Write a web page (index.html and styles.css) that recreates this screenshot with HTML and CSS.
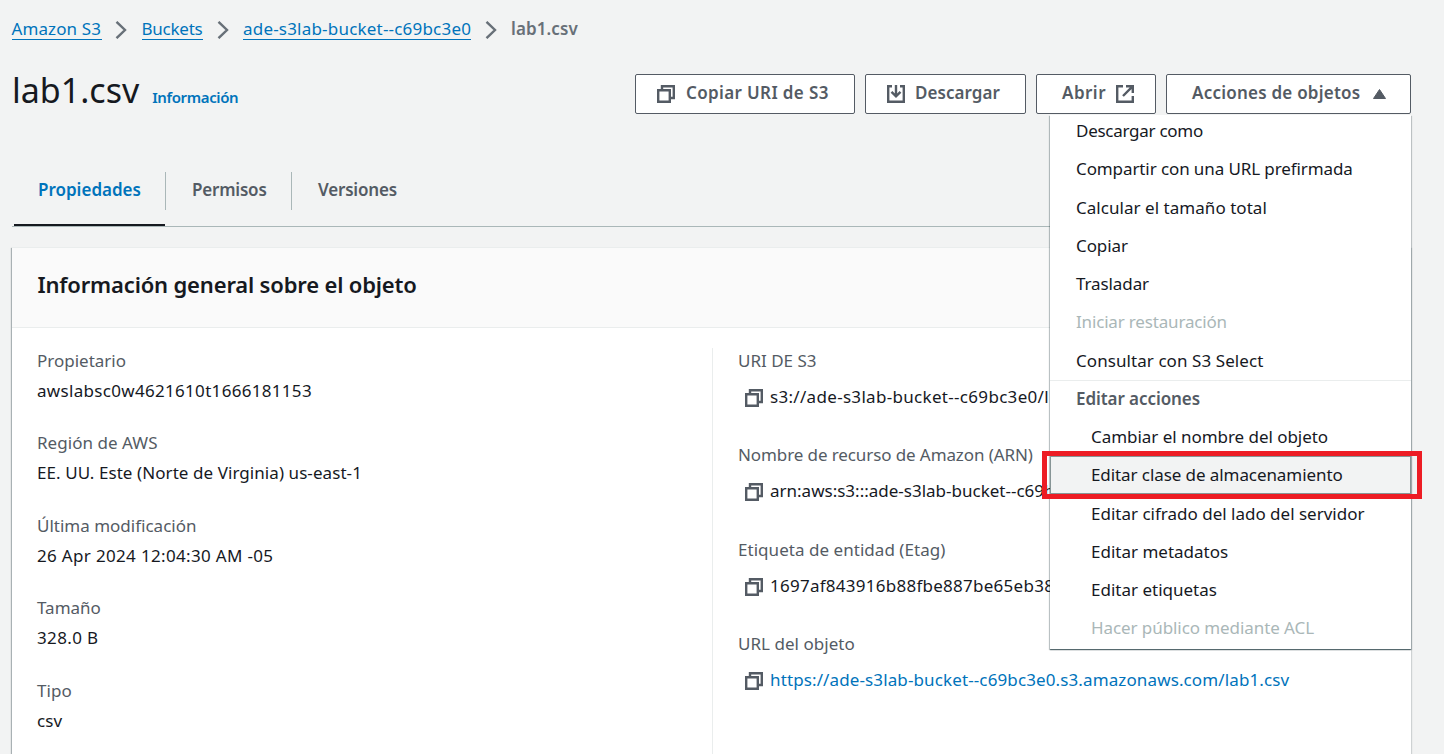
FILE: index.html
```html
<!DOCTYPE html>
<html lang="es">
<head>
<meta charset="utf-8">
<title>lab1.csv - Amazon S3</title>
<link rel="stylesheet" href="styles.css">
</head>
<body>
<svg class="defs" width="0" height="0">
  <symbol id="copy" viewBox="0 0 18 18"><path d="M5 5V1.200h11.800V13h-4M1.200 5.200h11.600v11.600H1.200z"/></symbol>
  <symbol id="chevron" viewBox="0 0 12 18"><path d="M1.500 .8L10 9l-8.500 8.200"/></symbol>
</svg>
<main class="page">
  <nav class="crumbs">
    <a class="crumb-1" href="#">Amazon S3</a>
    <svg class="chevron"><use href="#chevron"/></svg>
    <a class="crumb-2" href="#">Buckets</a>
    <svg class="chevron"><use href="#chevron"/></svg>
    <a class="crumb-3" href="#">ade-s3lab-bucket--c69bc3e0</a>
    <svg class="chevron"><use href="#chevron"/></svg>
    <span class="current">lab1.csv</span>
  </nav>

  <header class="header">
    <div class="title">
      <h1>lab1.csv</h1>
      <a class="info" href="#">Información</a>
    </div>
    <div class="actions">
      <button class="btn btn-copy"><svg class="icon"><use href="#copy"/></svg><span>Copiar URI de S3</span></button>
      <button class="btn btn-download"><svg class="icon" viewBox="0 0 18 18"><path d="M5 1.200H1.200v15.600h15.600V1.200H13M9 0v11M4.500 6.800L9 11.300l4.500-4.500"/></svg><span>Descargar</span></button>
      <button class="btn btn-open"><span>Abrir</span><svg class="icon" viewBox="0 0 18 18"><path d="M7 1.200H1.200v15.600h15.600V11M10 1.200h6.800V8M16.800 1.200L7 11"/></svg></button>
      <div class="dropdown">
        <button class="btn btn-more"><span>Acciones de objetos</span><svg class="caret" viewBox="0 0 13 10"><path d="M6.500 .5L12.500 9.500H.5z"/></svg></button>
        <div class="menu">
          <ul class="group">
            <li class="tk-n27">Descargar como</li>
            <li class="tk-n09">Compartir con una URL prefirmada</li>
            <li class="tk-05">Calcular el tamaño total</li>
            <li class="tk-n09">Copiar</li>
            <li class="tk-n09">Trasladar</li>
            <li class="disabled tk-n17">Iniciar restauración</li>
            <li class="tk-07">Consultar con S3 Select</li>
          </ul>
          <ul class="group sub">
            <li class="group-title">Editar acciones</li>
            <li class="tk-n04">Cambiar el nombre del objeto</li>
            <li class="active tk-n07">Editar clase de almacenamiento</li>
            <li>Editar cifrado del lado del servidor</li>
            <li>Editar metadatos</li>
            <li>Editar etiquetas</li>
            <li class="disabled tk-n07">Hacer público mediante ACL</li>
          </ul>
          <div class="marker"></div>
        </div>
      </div>
    </div>
  </header>

  <nav class="tabs">
    <a class="tab selected" href="#"><span>Propiedades</span></a>
    <a class="tab tab-perm" href="#"><span>Permisos</span></a>
    <a class="tab tab-vers" href="#"><span>Versiones</span></a>
  </nav>

  <section class="card">
    <div class="card-head"><h2>Información general sobre el objeto</h2></div>
    <div class="card-body">
      <dl class="col col-left">
        <div class="field"><dt>Propietario</dt><dd class="tk-31">awslabsc0w4621610t1666181153</dd></div>
        <div class="field"><dt class="tk-05">Región de AWS</dt><dd class="tk-07">EE. UU. Este (Norte de Virginia) us-east-1</dd></div>
        <div class="field"><dt>Última modificación</dt><dd class="tk-33">26 Apr 2024 12:04:30 AM -05</dd></div>
        <div class="field"><dt>Tamaño</dt><dd class="tk-35">328.0 B</dd></div>
        <div class="field"><dt class="tk-10">Tipo</dt><dd class="tk-10">csv</dd></div>
      </dl>
      <dl class="col col-right">
        <div class="field"><dt>URI DE S3</dt><dd class="tk-31"><svg class="icon"><use href="#copy"/></svg>s3://ade-s3lab-bucket--c69bc3e0/l</dd></div>
        <div class="field"><dt class="tk-n09">Nombre de recurso de Amazon (ARN)</dt><dd><svg class="icon"><use href="#copy"/></svg>arn:aws:s3:::ade-s3lab-bucket--c69b</dd></div>
        <div class="field"><dt class="tk-05">Etiqueta de entidad (Etag)</dt><dd class="tk-26"><svg class="icon"><use href="#copy"/></svg>1697af843916b88fbe887be65eb38</dd></div>
        <div class="field"><dt class="tk-05">URL del objeto</dt><dd class="tk-13"><svg class="icon"><use href="#copy"/></svg><a href="#">https://ade-s3lab-bucket--c69bc3e0.s3.amazonaws.com/lab1.csv</a></dd></div>
      </dl>
    </div>
  </section>
</main>
</body>
</html>
```
FILE: styles.css
```css
* { box-sizing: border-box; }
html, body { height: 100%; }
body {
  margin: 0;
  overflow: hidden;
  background: #f2f3f3;
  color: #16191f;
  font: 17px/27.5px "Noto Sans", sans-serif;
}
a { color: #0073bb; text-decoration: none; }
h1, h2, dl, dd, ul { margin: 0; padding: 0; }
ul { list-style: none; }
.defs { display: block; position: absolute; }
.page { height: 754px; padding: 0 33px 0 11.5px; display: flex; flex-direction: column; }

/* letter tracking steps */
.tk-n27 { letter-spacing: -.27px; }
.tk-n17 { letter-spacing: -.17px; }
.tk-n09 { letter-spacing: -.1px; }
.tk-n07 { letter-spacing: -.08px; }
.tk-n04 { letter-spacing: -.04px; }
.tk-05 { letter-spacing: .04px; }
.tk-07 { letter-spacing: .07px; }
.tk-10 { letter-spacing: .1px; }
.tk-13 { letter-spacing: .12px; }
.tk-26 { letter-spacing: .26px; }
.tk-31 { letter-spacing: .31px; }
.tk-33 { letter-spacing: .33px; }
.tk-35 { letter-spacing: .35px; }

/* breadcrumbs */
.crumbs { display: flex; align-items: center; height: 58px; flex: none; }
.crumbs a { height: 21px; line-height: 20px; border-bottom: 1px solid #0073bb; white-space: nowrap; }
.crumb-1 { width: 90px; letter-spacing: .1px; }
.crumb-2 { width: 61.5px; letter-spacing: -.24px; }
.crumb-3 { width: 228px; letter-spacing: .2px; }
.chevron { width: 12px; height: 18px; margin: 0 14.5px 0 13.5px; fill: none; stroke: #687078; stroke-width: 2.4; position: relative; top: 1px; }
.current { color: #687078; font-weight: 600; letter-spacing: .1px; }

/* title row */
.header { display: flex; justify-content: space-between; align-items: flex-start; height: 109px; flex: none; padding-top: 15.5px; }
.title { display: flex; align-items: baseline; gap: 13px; padding-left: .5px; margin-top: -2px; }
h1 { font-size: 34px; line-height: 36px; font-weight: 400; }
.info { font-size: 15px; font-weight: 600; letter-spacing: -.38px; }
.actions { display: flex; gap: 10px; }
.btn {
  height: 40px;
  display: flex;
  align-items: center;
  justify-content: flex-start;
  padding: 0 0 2px;
  font: 600 17px/27.5px "Noto Sans", sans-serif;
  color: #545b64;
  background: #fff;
  border: 1px solid #545b64;
  border-radius: 2px;
  white-space: nowrap;
}
.icon { width: 18px; height: 18px; flex: none; fill: none; stroke: #545b64; stroke-width: 2.4; }
.btn .icon { position: relative; top: 1px; }
.btn-copy { width: 220px; padding-left: 21px; gap: 11px; letter-spacing: .36px; }
.btn-download { width: 161px; padding-left: 21px; gap: 10px; letter-spacing: .06px; }
.btn-open { width: 120px; padding-left: 25px; gap: 10px; letter-spacing: .47px; }
.btn-more { width: 245px; padding-left: 25px; gap: 13px; letter-spacing: .23px; }
.caret { width: 13px; height: 10px; fill: #545b64; stroke: #545b64; stroke-linejoin: round; position: relative; top: 1px; }

/* dropdown menu laid over the page */
.dropdown { position: relative; }
.menu {
  position: absolute;
  z-index: 2;
  top: 41px;
  right: 0;
  width: 361px;
  height: 534.5px;
  background: #fff;
  box-shadow: 0 1px 1px 0 rgba(0, 28, 36, .5), 1px 1px 1px 0 rgba(0, 28, 36, .15), -1px 1px 1px 0 rgba(0, 28, 36, .2);
}
.group li { height: 38.25px; padding-left: 26px; display: flex; align-items: center; white-space: nowrap; }
.group:first-child li:first-child { height: 35.5px; padding-bottom: 3px; }
.sub { border-top: 1px solid #eaeded; }
.sub li { padding-left: 41px; }
.sub .group-title { height: 37.25px; padding-left: 26px; font-weight: 600; letter-spacing: -.07px; color: #545b64; }
.group .disabled { color: #aab7b8; }
.group .active { background: #f2f3f3; border: 1px solid #879596; padding-left: 40px; }
.marker { position: absolute; left: -8px; top: 336px; width: 380px; height: 48px; border: 5px solid #ed1c24; }

/* tabs */
.tabs { display: flex; height: 60px; flex: none; border-bottom: 1px solid #aab7b8; margin-left: .5px; }
.tab { height: 59px; padding-top: 4.5px; color: #545b64; font-weight: 600; }
.tab span { display: block; height: 38px; padding: 4px 25px 0 26px; border-right: 1px solid #aab7b8; }
.tab:last-child span { border-right: 0; }
.selected { width: 154px; color: #0073bb; background: linear-gradient(#16191f, #16191f) 2px 100% / 151px 2px no-repeat; }
.tab-perm { width: 126px; letter-spacing: -.2px; }
.tab-vers { letter-spacing: -.18px; }

/* overview card */
.card {
  margin-top: 20px;
  flex: 1;
  background: #fff;
  border-top: 1px solid #eaeded;
  box-shadow: 1px 1px 1px 0 rgba(0, 28, 36, .15), -1px 1px 1px 0 rgba(0, 28, 36, .3);
  display: flex;
  flex-direction: column;
}
.card-head { height: 80px; flex: none; display: flex; align-items: center; padding: 0 26px 6px; background: #fafafa; border-bottom: 1px solid #eaeded; }
h2 { font-size: 22px; font-weight: 600; letter-spacing: -.17px; }
.card-body { flex: 1; min-height: 0; padding: 20px 26px 0 25.5px; display: grid; grid-template-columns: 675px 1fr; }
.col-left { margin-top: -1.4px; }
.col-right { border-left: 1px solid #eaeded; padding-left: 25px; }
.field { height: 82.5px; white-space: nowrap; }
dt { color: #545b64; }
dd { display: flex; align-items: center; height: 27.5px; margin-top: 2.5px; }
.col-right .field { height: 94.4px; }
.col-right .field:first-child dt { line-height: 26px; height: 26.3px; }
.col-right dt { line-height: 26px; height: 26.3px; }
.col-right dd { margin-top: 8.7px; padding-left: 7px; gap: 7px; }
.col-right .icon { position: relative; top: 1px; }
```
